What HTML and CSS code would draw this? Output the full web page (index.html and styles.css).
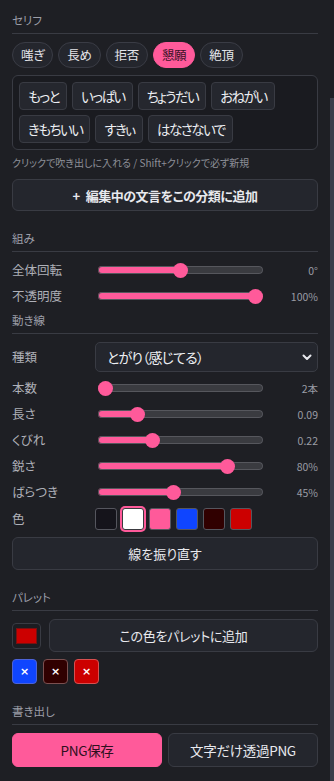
FILE: index.html
```html
<!DOCTYPE html>
<html lang="ja">
<head>
<meta charset="utf-8">
<link rel="stylesheet" href="styles.css">
</head>
<body>
<div class="panel">
  <section class="sec first">
    <h2 class="sec-title">セリフ</h2>
    <div class="tabs">
      <button class="tab">嗤ぎ</button>
      <button class="tab">長め</button>
      <button class="tab">拒否</button>
      <button class="tab active">懇願</button>
      <button class="tab">絶頂</button>
    </div>
    <div class="phrases">
      <button class="chip">もっと</button>
      <button class="chip">いっぱい</button>
      <button class="chip">ちょうだい</button>
      <button class="chip">おねがい</button>
      <button class="chip">きもちいい</button>
      <button class="chip">すきぃ</button>
      <button class="chip">はなさないで</button>
    </div>
    <p class="hint">クリックで吹き出しに入れる / Shift+クリックで必ず新規</p>
    <button class="btn add-btn"><span class="plus">+</span>編集中の文言をこの分類に追加</button>
  </section>

  <section class="sec">
    <h2 class="sec-title">組み</h2>
    <div class="rows">
      <div class="row"><span class="lbl">全体回転</span><input class="range" type="range" style="--p:0.5" value="50"><span class="val">0°</span></div>
      <div class="row"><span class="lbl">不透明度</span><input class="range" type="range" style="--p:1" value="100"><span class="val">100%</span></div>
    </div>
  </section>

  <section class="sec tight">
    <h2 class="sec-title">動き線</h2>
    <div class="rows">
      <div class="row sel-row"><span class="lbl">種類</span>
        <div class="select-wrap">
          <select class="select"><option>とがり（感じてる）</option></select>
          <svg class="chev" width="10" height="7" viewBox="0 0 10 7"><path d="M1.5 1.5 L5 5 L8.5 1.5" fill="none" stroke="#e8e9ee" stroke-width="2" stroke-linecap="round" stroke-linejoin="round"/></svg>
        </div>
      </div>
      <div class="row"><span class="lbl">本数</span><input class="range" type="range" style="--p:0" value="0"><span class="val">2本</span></div>
      <div class="row"><span class="lbl">長さ</span><input class="range" type="range" style="--p:0.21" value="21"><span class="val">0.09</span></div>
      <div class="row"><span class="lbl">くびれ</span><input class="range" type="range" style="--p:0.31" value="31"><span class="val">0.22</span></div>
      <div class="row"><span class="lbl">鋭さ</span><input class="range" type="range" style="--p:0.81" value="81"><span class="val">80%</span></div>
      <div class="row"><span class="lbl">ばらつき</span><input class="range" type="range" style="--p:0.45" value="45"><span class="val">45%</span></div>
      <div class="row sw-row"><span class="lbl">色</span>
        <div class="swatches">
          <span class="sw" style="background:#15141b"></span>
          <span class="sw selected" style="background:#ffffff"></span>
          <span class="sw" style="background:#ff5a9a"></span>
          <span class="sw" style="background:#0f45ff"></span>
          <span class="sw" style="background:#300000"></span>
          <span class="sw" style="background:#cc0000"></span>
        </div>
      </div>
      <button class="btn big">線を振り直す</button>
    </div>
  </section>

  <section class="sec">
    <h2 class="sec-title">パレット</h2>
    <div class="pal-row">
      <span class="color-input"><span class="color-fill"></span></span>
      <button class="btn pal-btn">この色をパレットに追加</button>
    </div>
    <div class="pal-chips">
      <span class="pchip blue">×</span>
      <span class="pchip maroon">×</span>
      <span class="pchip red">×</span>
    </div>
  </section>

  <section class="sec">
    <h2 class="sec-title">書き出し</h2>
    <div class="export">
      <button class="btn primary">PNG保存</button>
      <button class="btn">文字だけ透過PNG</button>
    </div>
  </section>
</div>
<div class="scroll-thumb"></div>
</body>
</html>
```
FILE: styles.css
```css
* { box-sizing: border-box; }
html, body { margin: 0; padding: 0; }
body {
  background: #1e1f24;
  color: #e6e7ec;
  font-family: "Noto Sans CJK JP", "Noto Sans", sans-serif;
  font-feature-settings: "palt";
  width: 334px;
  height: 781px;
  overflow: hidden;
  position: relative;
}
button, input, select { font-family: inherit; font-feature-settings: "palt"; }
.panel { width: 330px; padding: 12px 12px 0 12px; }
.sec { margin-top: 19px; }
.sec.first { margin-top: 0; }
.sec.tight { margin-top: 6px; }
.sec-title {
  margin: 0 0 8px 0;
  font-size: 11.5px;
  font-weight: 400;
  line-height: 16px;
  color: #9c9ea8;
  padding-bottom: 5px;
  border-bottom: 1px solid #393b43;
}
.tabs { display: flex; gap: 5px; }
.tab {
  height: 26px;
  padding: 0 8px;
  border: 1px solid #3a3c45;
  border-radius: 13px;
  background: #24262d;
  color: #e4e5ea;
  font-size: 12.5px;
  letter-spacing: -0.3px;
  line-height: 24px;
}
.tab.active { background: #ff5a9a; border-color: #ff5a9a; color: #3a1326; }
.phrases {
  margin-top: 7px;
  border: 1px solid #393b43;
  border-radius: 6px;
  background: #1a1b20;
  padding: 6px;
  display: flex;
  flex-wrap: wrap;
  gap: 5px;
}
.chip {
  height: 28px;
  padding: 0 7px 0 8px;
  border: 1px solid #393b43;
  border-radius: 4px;
  background: #25272e;
  color: #eceef2;
  font-size: 13.5px;
  letter-spacing: -1.5px;
  line-height: 26px;
}
.hint {
  margin: 6px 0 0 0;
  font-size: 10px;
  line-height: 14px;
  color: #8d8f98;
  white-space: nowrap;
}
.btn {
  border: 1px solid #393b43;
  border-radius: 6px;
  background: #24262d;
  color: #e8e9ee;
  font-size: 13px;
  font-weight: 400;
  padding: 0;
}
.add-btn { display: block; width: 100%; height: 32px; margin-top: 9px; font-weight: 700; letter-spacing: -0.5px; }
.plus { margin-right: 6px; }
.rows { display: flex; flex-direction: column; gap: 6px; }
.row {
  display: grid;
  grid-template-columns: 83px 1fr 55px;
  align-items: center;
  height: 20px;
}
.lbl { font-size: 12.5px; color: #aeb0b8; line-height: 20px; }
.val { text-align: right; font-size: 10.5px; color: #9a9ca5; }
.range {
  -webkit-appearance: none;
  appearance: none;
  margin: 0 0 0 3px;
  height: 8px;
  border-radius: 4px;
  background:
    linear-gradient(to right, #ff5a9a 0, #ff5a9a calc(7px + (100% - 14px) * var(--p)), transparent calc(7px + (100% - 14px) * var(--p))),
    #3a3b40;
  box-shadow: inset 0 0 0 1px #56575d;
  outline: none;
}
.range::-webkit-slider-thumb {
  -webkit-appearance: none;
  appearance: none;
  width: 15px;
  height: 15px;
  border-radius: 50%;
  background: #ff5a9a;
  border: none;
}
.sel-row { grid-template-columns: 83px 1fr; height: 30px; }
.select-wrap { position: relative; height: 30px; }
.select {
  -webkit-appearance: none;
  appearance: none;
  width: 100%;
  height: 30px;
  border: 1px solid #393b43;
  border-radius: 5px;
  background: #24262d;
  color: #eceef2;
  font-size: 14px;
  letter-spacing: -0.8px;
  padding: 0 0 0 11px;
}
.chev { position: absolute; right: 6px; top: 12px; }
.sw-row { grid-template-columns: 83px 1fr; height: 22px; }
.swatches { display: flex; gap: 5px; }
.sw {
  width: 22px; height: 22px;
  border: 1px solid #55565e;
  border-radius: 3px;
}
.sw.selected {
  border: 1px solid #3a3a3f;
  box-shadow: 0 0 0 2px #ff5a9a;
  border-radius: 3px;
}
.big { height: 33px; width: 100%; margin-top: 1px; }
.pal-row { display: flex; gap: 8px; align-items: center; }
.color-input {
  width: 29px; height: 26px;
  border: 1px solid #393b43;
  border-radius: 4px;
  padding: 4px 3px;
  background: #1c1d22;
  flex: none;
}
.color-fill { display: block; width: 100%; height: 100%; background: #cc0000; border: 1px solid #7a1010; }
.pal-btn { flex: 1; height: 33px; letter-spacing: -0.3px; }
.pal-chips { display: flex; gap: 6px; margin-top: 7px; }
.pchip {
  width: 25px; height: 25px;
  border-radius: 4px;
  display: flex; align-items: center; justify-content: center;
  color: #fff; font-size: 11px; font-weight: 700;
  font-family: "DejaVu Sans", sans-serif;
}
.pchip.blue { background: #0f45ff; border: 1px solid #4d63d6; }
.pchip.maroon { background: #300000; border: 1px solid #7a5050; }
.pchip.red { background: #cc0000; border: 1px solid #d85050; }
.export { display: flex; gap: 6px; }
.export .btn { flex: 1; height: 34px; font-size: 13.5px; letter-spacing: -0.3px; }
.btn.primary { background: #ff5a9a; border-color: #ff5a9a; color: #2e1020; }
.scroll-thumb {
  position: absolute;
  right: 0; top: 98px;
  width: 4px; height: 683px;
  background: #3b3e49;
}
```
